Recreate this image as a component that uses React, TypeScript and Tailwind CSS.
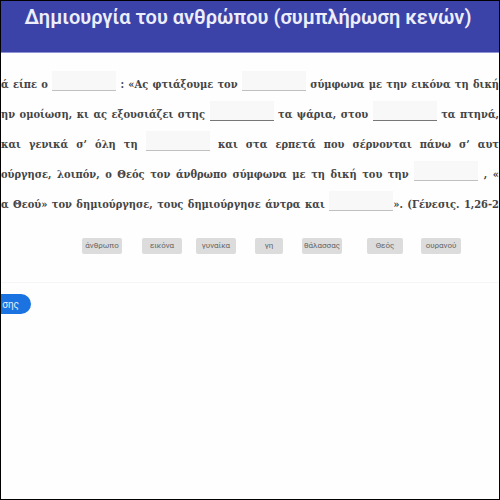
import React, { useState } from "react";
import clsx from "clsx";

// a line is a list of text pieces and blanks
interface Blank {
  id: string;
  label: string;
  strong?: boolean;
}

type Piece = string | Blank;

const lines: Piece[][] = [
  [
    "ά είπε ο ",
    { id: "b1", label: "Κενό 1" },
    " : «Ας φτιάξουμε τον ",
    { id: "b2", label: "Κενό 2" },
    " σύμφωνα με την εικόνα τη δική",
  ],
  [
    "ην ομοίωση, κι ας εξουσιάζει στης ",
    { id: "b3", label: "Κενό 3", strong: true },
    " τα ψάρια, στου ",
    { id: "b4", label: "Κενό 4", strong: true },
    " τα πτηνά,",
  ],
  [
    "και γενικά σ’ όλη τη ",
    { id: "b5", label: "Κενό 5" },
    " και στα ερπετά που σέρνονται πάνω σ’ αυτ",
  ],
  [
    "ούργησε, λοιπόν, ο Θεός τον άνθρωπο σύμφωνα με τη δική του την ",
    { id: "b6", label: "Κενό 6" },
    " , «",
  ],
  [
    "α Θεού» τον δημιούργησε, τους δημιούργησε άντρα και ",
    { id: "b7", label: "Κενό 7" },
    "». (Γένεσις. 1,26-2",
  ],
];

const words = [
  { text: "άνθρωπο", width: "w-10" },
  { text: "εικόνα", width: "w-10" },
  { text: "γυναίκα", width: "w-10" },
  { text: "γη", width: "w-7" },
  { text: "θάλασσας", width: "w-10" },
  { text: "Θεός", width: "w-9" },
  { text: "ουρανού", width: "w-10" },
];

const BlankInput = ({ blank }: { blank: Blank }) => {
  const [value, setValue] = useState("");

  return (
    <input
      type="text"
      aria-label={blank.label}
      value={value}
      onChange={(e) => setValue(e.target.value)}
      className={clsx(
        "h-5 w-16 border-b bg-[#f8f8f8] text-center align-text-bottom text-xs outline-none",
        blank.strong ? "border-[#777777]" : "border-[#c0c0c0]"
      )}
    />
  );
};

export default function App() {
  return (
    <div className="min-h-screen overflow-hidden border border-black bg-[#fefefe]">
      <header className="h-[52px] border-b border-[#8f92d4] bg-[#3c43a8] pt-1 pr-1 text-center">
        <h1 className="whitespace-nowrap font-['Roboto',sans-serif] text-xl leading-6 font-semibold text-[#eceefc]">
          Δημιουργία του ανθρώπου (συμπλήρωση κενών)
        </h1>
      </header>

      <main>
        <div className="pt-[17px] font-['DejaVu_Serif_Condensed','DejaVu_Serif',serif] text-[11px] font-bold text-[#444444]">
          {lines.map((line, i) => (
            <p
              key={i}
              className="h-[30px] overflow-hidden text-justify leading-[30px] whitespace-nowrap [text-align-last:justify]"
            >
              {line.map((piece, j) =>
                typeof piece === "string" ? (
                  <React.Fragment key={j}>{piece}</React.Fragment>
                ) : (
                  <BlankInput key={piece.id} blank={piece} />
                )
              )}
            </p>
          ))}
        </div>

        <div className="grid grid-cols-[60px_54px_59px_47px_65px_54px_41px] justify-center border-b border-[#f6f6f6] pt-[18px] pb-7 pl-11">
          {words.map((word) => (
            <button
              key={word.text}
              type="button"
              className={clsx(
                "h-4 rounded-xs bg-[#dcdcdc] text-center font-['Roboto',sans-serif] text-[8px] leading-4 text-[#666666]",
                word.width
              )}
            >
              {word.text}
            </button>
          ))}
        </div>

        <button
          type="button"
          className="mt-[11px] flex h-5 w-[30px] items-center justify-end rounded-r-full bg-[#1a73e0] pr-3 font-['Roboto',sans-serif] text-[10px] text-[#e4effc]"
        >
          σης
        </button>
      </main>
    </div>
  );
}
